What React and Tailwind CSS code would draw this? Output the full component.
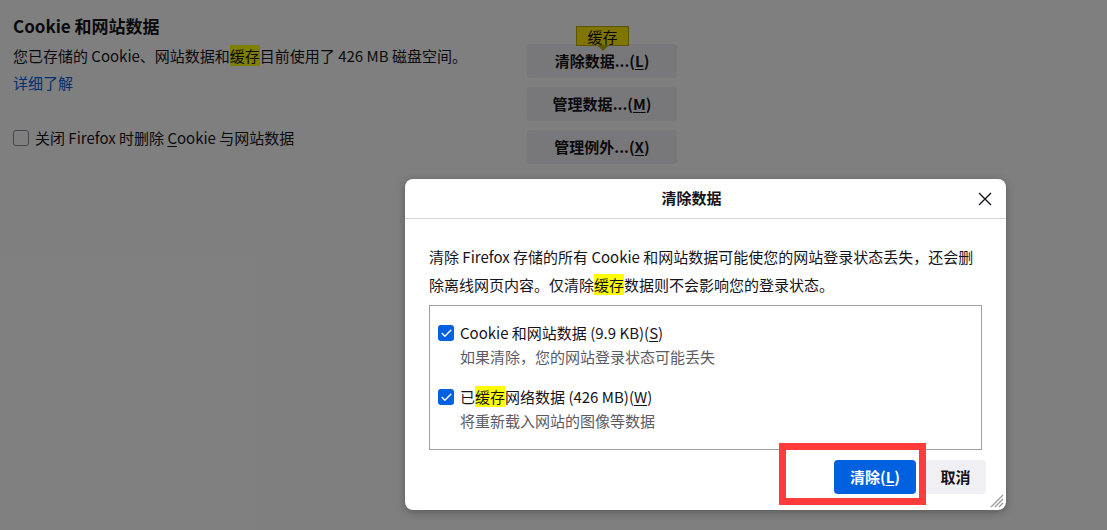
import { Check } from "lucide-react";

const font = { fontFamily: '"Noto Sans CJK SC", "Noto Sans", sans-serif' };

const Key = ({ children }) => <span className="underline underline-offset-2">{children}</span>;

const Mark = ({ children }) => <span className="bg-[#ffff00]">{children}</span>;

const PageButton = ({ label, accessKey }) => (
  <button className="h-[34px] w-[150px] rounded-[4px] bg-[#f0f0f4] text-[15px] font-semibold text-[#15141a]">
    {label}...(<Key>{accessKey}</Key>)
  </button>
);

const DataOption = ({ label, hint }) => (
  <div>
    <div className="flex items-center gap-[6px] leading-[24px]">
      <span className="flex h-4 w-4 items-center justify-center rounded-[3px] bg-[#0061e0]">
        <Check size={13} strokeWidth={2.5} className="text-white" />
      </span>
      <span className="text-[15px] text-[#15141a]">{label}</span>
    </div>
    <p className="pl-[22px] text-[15px] leading-[24px] text-[#5b5b66]">{hint}</p>
  </div>
);

export default function App() {
  return (
    <div className="relative h-[530px] w-[1107px] overflow-hidden bg-white" style={font}>
      {/* Preferences page */}
      <div className="flex pl-[13px] pt-[14px] text-[#15141a]">
        <div className="w-[514px]">
          <h2 className="text-[17px] font-bold leading-[24px]">Cookie 和网站数据</h2>
          <p className="mt-[6px] text-[15px] leading-[24px]">
            您已存储的 Cookie、网站数据和<Mark>缓存</Mark>目前使用了 426 MB 磁盘空间。
          </p>
          <a className="mt-[3px] block text-[15px] leading-[24px] text-[#0061e0]">详细了解</a>
          <label className="mt-[31px] flex items-center gap-[6px] text-[15px] leading-[24px]">
            <span className="h-4 w-4 rounded-[3px] border border-[#8f8f9d] bg-white" />
            <span>
              关闭 Firefox 时删除 <Key>C</Key>ookie 与网站数据
            </span>
          </label>
        </div>
        <div className="relative mt-[30px] flex flex-col gap-[9px]">
          <div className="absolute -top-[18px] left-[49px] flex h-[20px] w-[53px] items-center justify-center border border-[#b8a800] bg-[#ffe900] text-[15px] leading-none">
            缓存
            <span className="absolute -bottom-[6px] left-1/2 h-0 w-0 -translate-x-1/2 border-x-[5px] border-t-[5px] border-x-transparent border-t-[#b8a800]" />
          </div>
          <PageButton label="清除数据" accessKey="L" />
          <PageButton label="管理数据" accessKey="M" />
          <PageButton label="管理例外" accessKey="X" />
        </div>
      </div>

      {/* Modal backdrop */}
      <div className="absolute inset-0 bg-black/50" />

      {/* Clear data dialog */}
      <div className="absolute left-[405px] top-[179px] flex h-[331px] w-[601px] flex-col rounded-[8px] bg-white shadow-[0_2px_8px_rgba(0,0,0,0.3)]">
        <div className="relative flex h-[40px] items-center justify-center border-b border-[#d7d7db] pr-[28px]">
          <span className="text-[15px] font-bold text-[#15141a]">清除数据</span>
          <svg className="absolute right-[14px] top-[13px]" width="14" height="14" viewBox="0 0 14 14">
            <path d="M1 1 L13 13 M13 1 L1 13" stroke="#15141a" strokeWidth="1.4" />
          </svg>
        </div>
        <div className="px-6 pt-[24px]">
          <p className="text-[15px] leading-[28px] text-[#15141a]">
            清除 Firefox 存储的所有 Cookie 和网站数据可能使您的网站登录状态丢失，还会删除离线网页内容。仅清除<Mark>缓存</Mark>数据则不会影响您的登录状态。
          </p>
          <div className="mt-[6px] flex h-[145px] flex-col gap-4 border border-[#9e9ea6] pl-2 pt-[15px]">
            <DataOption
              label={<>Cookie 和网站数据 (9.9 KB)(<Key>S</Key>)</>}
              hint="如果清除，您的网站登录状态可能丢失"
            />
            <DataOption
              label={<>已<Mark>缓存</Mark>网络数据 (426 MB)(<Key>W</Key>)</>}
              hint="将重新载入网站的图像等数据"
            />
          </div>
        </div>
        <div className="mt-[10px] flex justify-end gap-[9px] pr-5">
          <button className="h-[34px] w-[82px] rounded-[4px] bg-[#0061e0] text-[15px] font-bold text-white">
            清除(<Key>L</Key>)
          </button>
          <button className="h-[34px] w-[61px] rounded-[4px] bg-[#f0f0f4] text-[15px] font-bold text-[#15141a]">
            取消
          </button>
        </div>

        {/* red annotation box */}
        <div className="absolute left-[374px] top-[264px] h-[62px] w-[147px] border-[7px] border-[#ff3c3c]" />

        {/* resize grip */}
        <svg className="absolute bottom-[2px] right-[2px]" width="14" height="14" viewBox="0 0 14 14">
          <g stroke="#9a9aa0" strokeWidth="1.2">
            <line x1="1" y1="13" x2="13" y2="1" />
            <line x1="5" y1="13" x2="13" y2="5" />
            <line x1="9" y1="13" x2="13" y2="9" />
          </g>
        </svg>
      </div>
    </div>
  );
}
